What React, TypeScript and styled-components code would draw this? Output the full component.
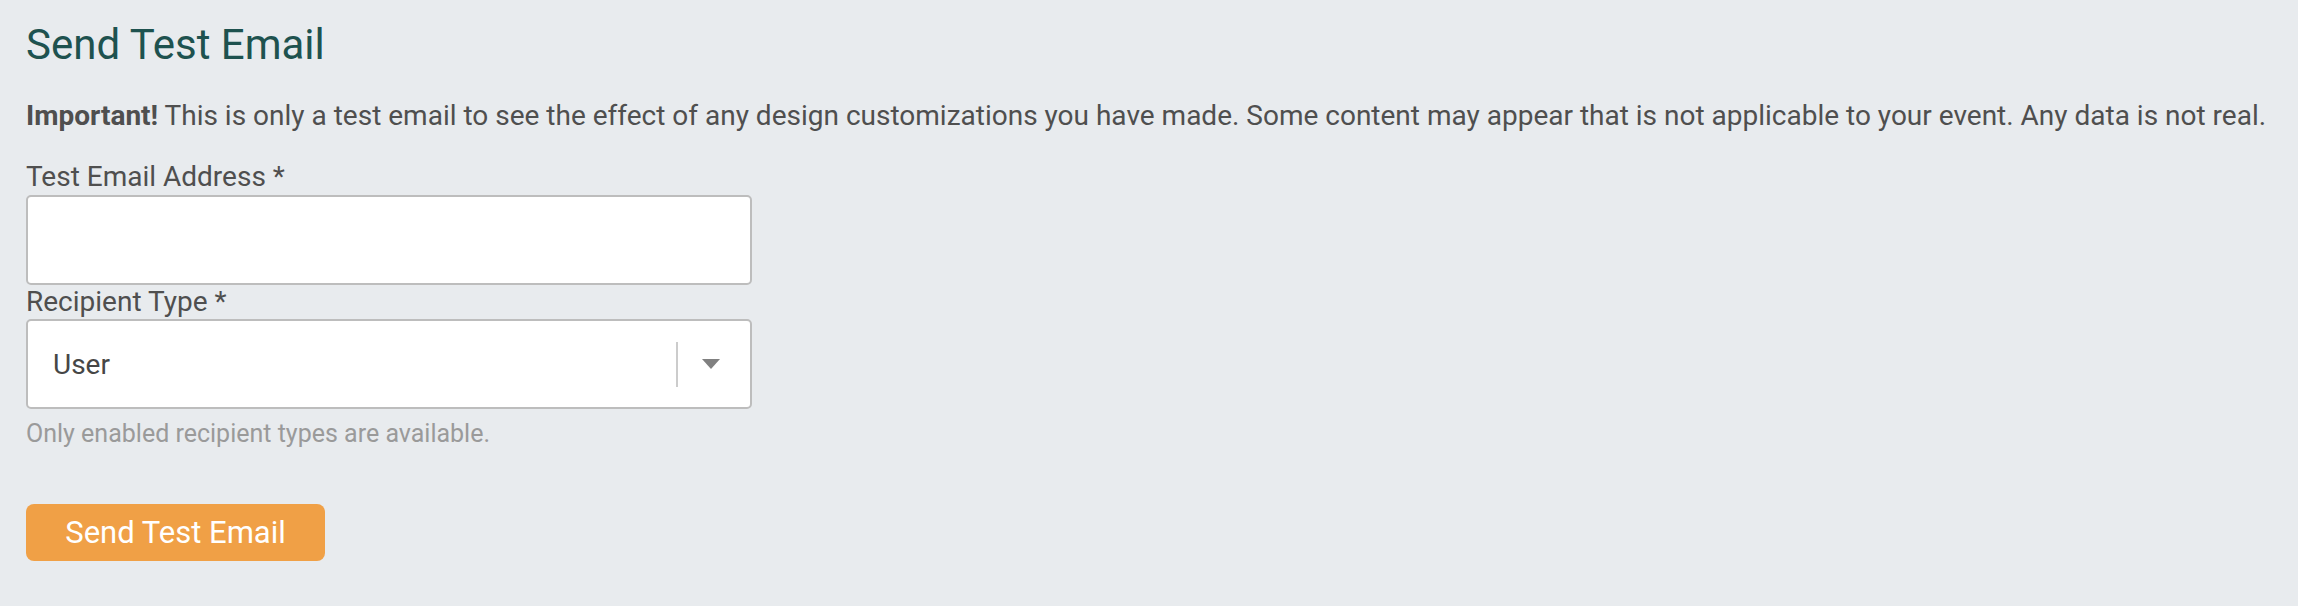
import styled, { createGlobalStyle } from "styled-components";

const GlobalStyle = createGlobalStyle`
  html, body {
    margin: 0;
    padding: 0;
    background: #e8ebee;
  }
  body {
    font-family: Roboto, "Liberation Sans", Arial, sans-serif;
  }
`;

const Page = styled.div`
  min-height: 606px;
  box-sizing: border-box;
  padding: 21px 26px;
  background: #e8ebee;
  display: flex;
  flex-direction: column;
  align-items: flex-start;
`;

const Title = styled.h1`
  margin: 0;
  font-size: 42px;
  line-height: 48px;
  font-weight: 400;
  color: #1e524f;
`;

const Notice = styled.p`
  margin: 30px 0 0;
  font-size: 28px;
  line-height: 33px;
  color: #4f4f4f;

  strong {
    font-weight: 700;
  }
`;

const Field = styled.div<{ $first?: boolean }>`
  display: flex;
  flex-direction: column;
  margin-top: ${(p) => (p.$first ? "28px" : "0")};
`;

const Label = styled.label`
  font-size: 28px;
  line-height: 33px;
  color: #4f4f4f;
`;

const TextInput = styled.input`
  box-sizing: border-box;
  width: 726px;
  height: 90px;
  margin-top: 2px;
  border: 2px solid #bdbdbd;
  border-radius: 5px;
  background: #fff;
  font-family: inherit;
  font-size: 28px;
  padding: 0 24px;
  outline: none;
`;

const SelectBox = styled.div`
  box-sizing: border-box;
  width: 726px;
  height: 90px;
  margin-top: 1px;
  border: 2px solid #bdbdbd;
  border-radius: 5px;
  background: #fff;
  display: flex;
  align-items: center;
  padding: 0 30px 0 25px;
  cursor: pointer;
`;

const SelectValue = styled.span`
  flex: 1;
  font-size: 28px;
  color: #464646;
`;

const Divider = styled.span`
  width: 2px;
  height: 45px;
  background: #cccccc;
  margin-right: 24px;
`;

const Caret = styled.span`
  width: 0;
  height: 0;
  border-left: 9.5px solid transparent;
  border-right: 9.5px solid transparent;
  border-top: 10px solid #808080;
`;

const Help = styled.div`
  margin-top: 10px;
  font-size: 25px;
  line-height: 29px;
  color: #9a9a9a;
`;

const SendButton = styled.button`
  margin-top: 56px;
  width: 299px;
  height: 57px;
  border: none;
  border-radius: 8px;
  background: #f0a046;
  color: #fff;
  font-family: inherit;
  font-size: 31px;
  cursor: pointer;
`;

export default function App() {
  return (
    <>
      <GlobalStyle />
      <Page>
        <Title>Send Test Email</Title>
        <Notice>
          <strong>Important!</strong> This is only a test email to see the effect of any design
          customizations you have made. Some content may appear that is not applicable to your
          event. Any data is not real.
        </Notice>
        <Field $first>
          <Label>Test Email Address *</Label>
          <TextInput type="email" />
        </Field>
        <Field>
          <Label>Recipient Type *</Label>
          <SelectBox>
            <SelectValue>User</SelectValue>
            <Divider />
            <Caret />
          </SelectBox>
        </Field>
        <Help>Only enabled recipient types are available.</Help>
        <SendButton>Send Test Email</SendButton>
      </Page>
    </>
  );
}
